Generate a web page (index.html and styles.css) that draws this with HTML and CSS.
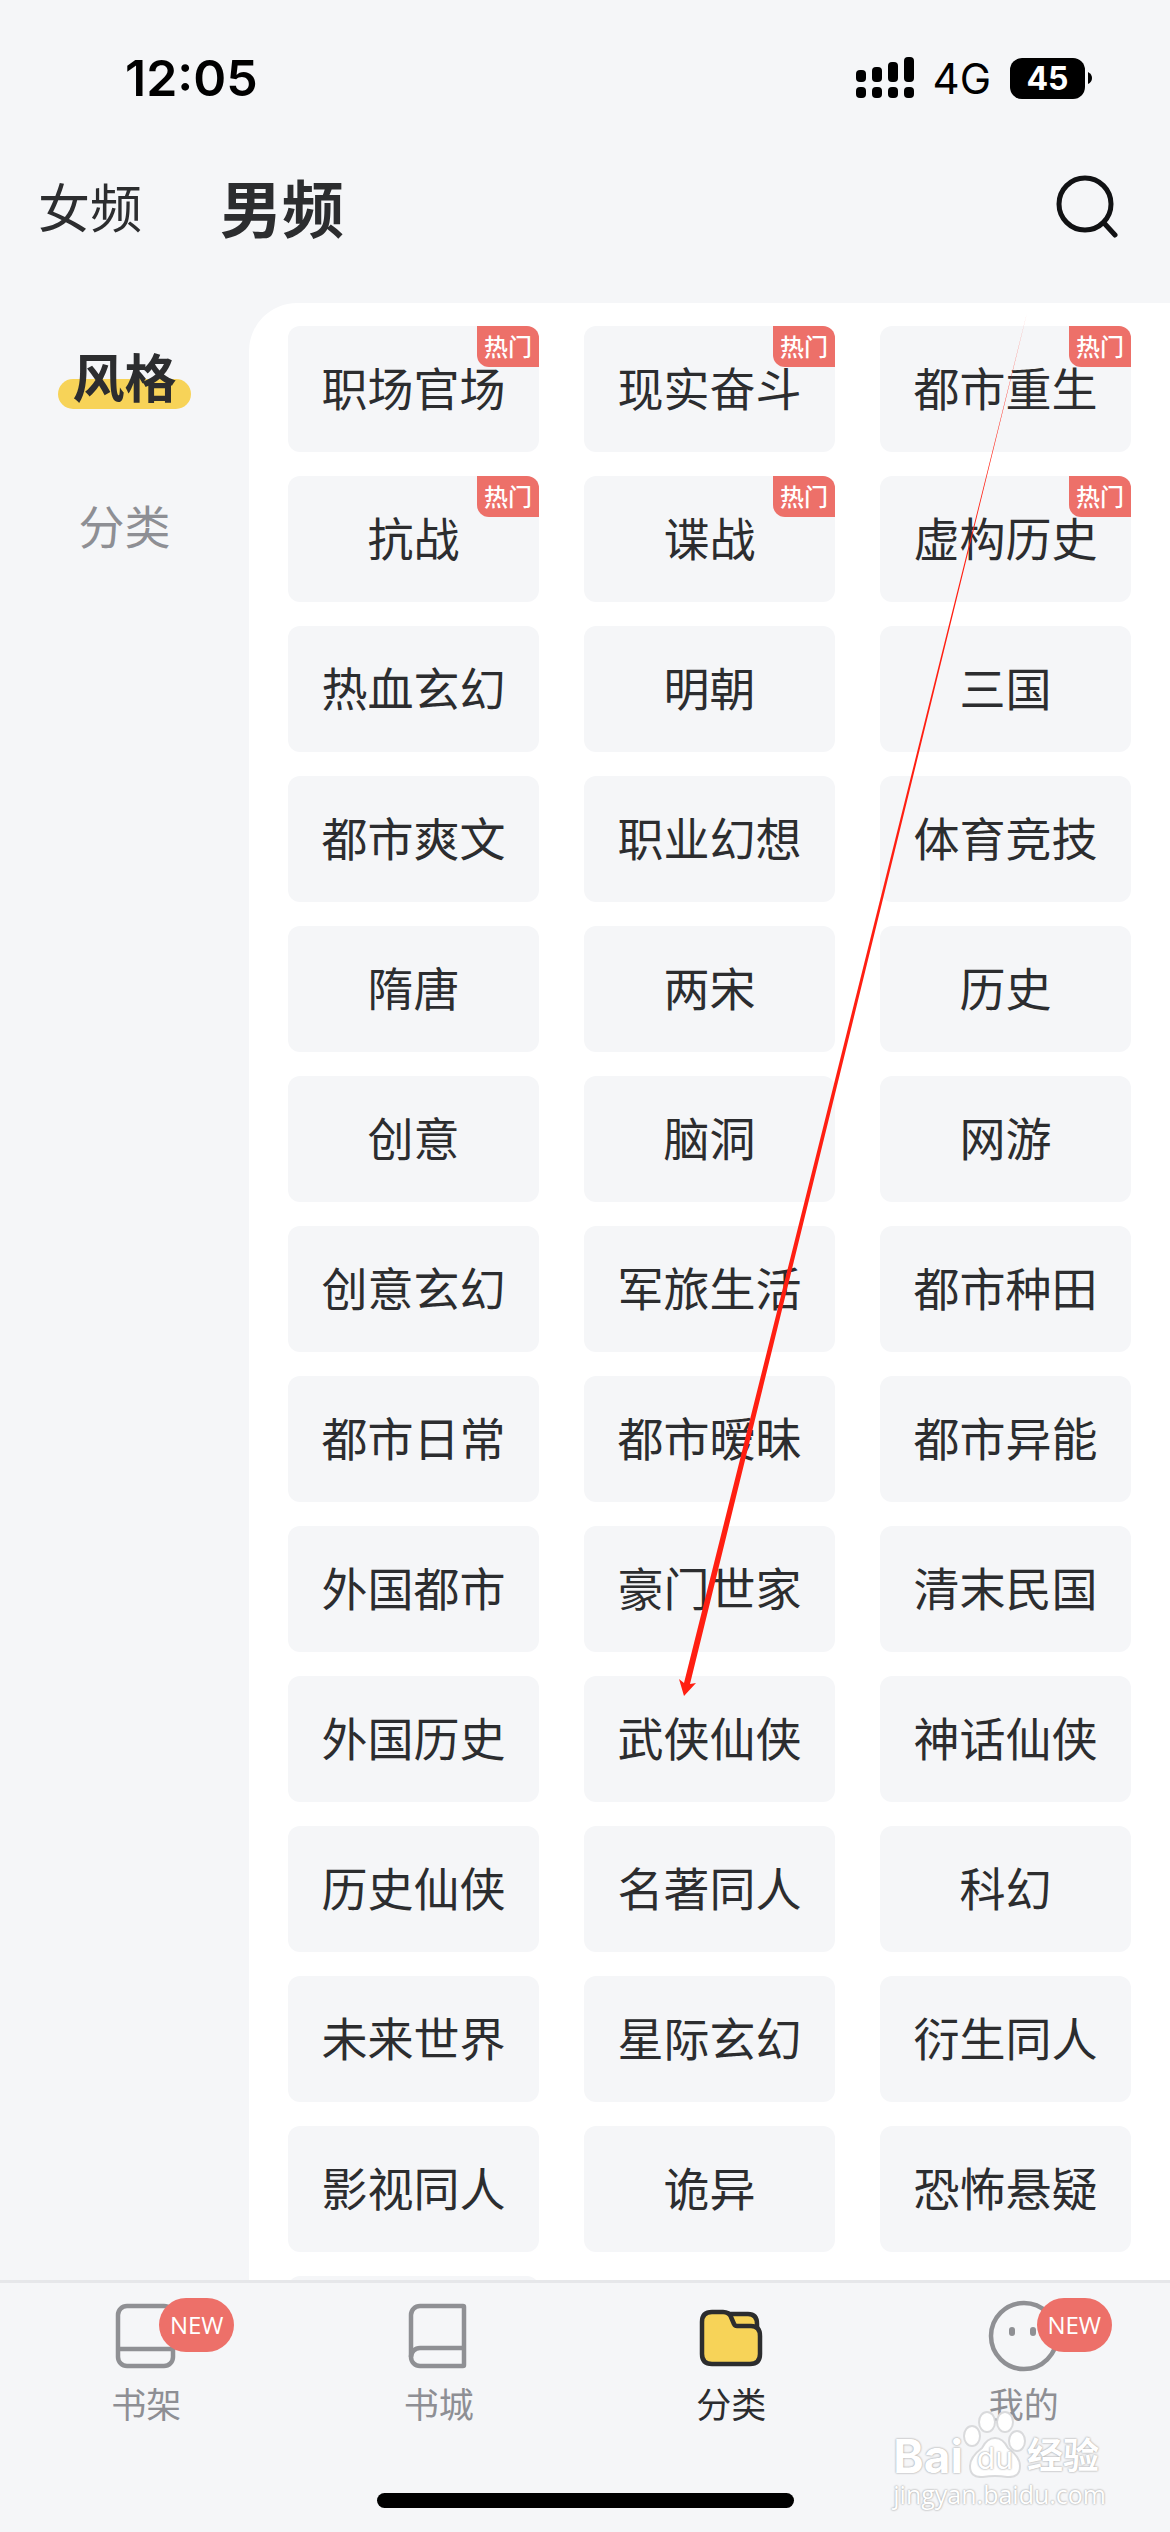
FILE: index.html
```html
<!DOCTYPE html>
<html lang="zh-CN">
<head>
<meta charset="utf-8">
<meta name="viewport" content="width=device-width, initial-scale=1">
<title>分类</title>
<link rel="stylesheet" href="styles.css">
</head>
<body>
<div class="app">
  <div class="status">
    <span class="time">12:05</span>
    <div class="status-right">
      <svg class="signal" width="58" height="42" viewBox="0 0 58 42" aria-hidden="true">
        <rect x="0" y="13" width="10" height="12" rx="4"/><rect x="16" y="10" width="10" height="15" rx="4"/><rect x="32" y="5" width="10" height="20" rx="4"/><rect x="48" y="0" width="10" height="25" rx="4"/>
        <rect x="0" y="30" width="10" height="11" rx="4"/><rect x="16" y="30" width="10" height="11" rx="4"/><rect x="32" y="30" width="10" height="11" rx="4"/><rect x="48" y="30" width="10" height="11" rx="4"/>
      </svg>
      <span class="network">4G</span>
      <div class="battery"><span class="battery-level">45</span><svg width="4" height="12" viewBox="0 0 4 12" aria-hidden="true"><path d="M0 0Q4 2 4 6T0 12Z"/></svg></div>
    </div>
  </div>

  <header class="header">
    <nav class="channels">
      <a class="channel" href="#female">女频</a>
      <a class="channel channel-active" href="#male">男频</a>
    </nav>
    <button class="search" type="button" aria-label="搜索">
      <svg width="64" height="64" viewBox="0 0 64 64" fill="none" stroke="#111214" stroke-width="5" stroke-linecap="round" aria-hidden="true"><circle cx="30" cy="30" r="26"/><path d="M49 49l11 12"/></svg>
    </button>
  </header>

  <div class="content">
    <nav class="sidebar">
      <a class="side-link side-active" href="#style">风格</a>
      <a class="side-link" href="#category">分类</a>
    </nav>
    <main class="panel">
      <div class="grid">
        <button class="tile" type="button">职场官场<span class="hot">热门</span></button>
        <button class="tile" type="button">现实奋斗<span class="hot">热门</span></button>
        <button class="tile" type="button">都市重生<span class="hot">热门</span></button>
        <button class="tile" type="button">抗战<span class="hot">热门</span></button>
        <button class="tile" type="button">谍战<span class="hot">热门</span></button>
        <button class="tile" type="button">虚构历史<span class="hot">热门</span></button>
        <button class="tile" type="button">热血玄幻</button>
        <button class="tile" type="button">明朝</button>
        <button class="tile" type="button">三国</button>
        <button class="tile" type="button">都市爽文</button>
        <button class="tile" type="button">职业幻想</button>
        <button class="tile" type="button">体育竞技</button>
        <button class="tile" type="button">隋唐</button>
        <button class="tile" type="button">两宋</button>
        <button class="tile" type="button">历史</button>
        <button class="tile" type="button">创意</button>
        <button class="tile" type="button">脑洞</button>
        <button class="tile" type="button">网游</button>
        <button class="tile" type="button">创意玄幻</button>
        <button class="tile" type="button">军旅生活</button>
        <button class="tile" type="button">都市种田</button>
        <button class="tile" type="button">都市日常</button>
        <button class="tile" type="button">都市暧昧</button>
        <button class="tile" type="button">都市异能</button>
        <button class="tile" type="button">外国都市</button>
        <button class="tile" type="button">豪门世家</button>
        <button class="tile" type="button">清末民国</button>
        <button class="tile" type="button">外国历史</button>
        <button class="tile" type="button">武侠仙侠</button>
        <button class="tile" type="button">神话仙侠</button>
        <button class="tile" type="button">历史仙侠</button>
        <button class="tile" type="button">名著同人</button>
        <button class="tile" type="button">科幻</button>
        <button class="tile" type="button">未来世界</button>
        <button class="tile" type="button">星际玄幻</button>
        <button class="tile" type="button">衍生同人</button>
        <button class="tile" type="button">影视同人</button>
        <button class="tile" type="button">诡异</button>
        <button class="tile" type="button">恐怖悬疑</button>
        <div class="tile"></div>
      </div>
    </main>
  </div>

  <footer class="footer">
    <nav class="tabs">
      <a class="tab" href="#shelf">
        <span class="tab-icon">
          <svg width="72" height="72" viewBox="0 0 72 72" fill="none" stroke="#8f9094" stroke-width="4.5" aria-hidden="true"><rect x="8" y="6" width="55" height="60" rx="9"/><path d="M8 49h55"/></svg>
          <span class="new">NEW</span>
        </span>
        <span>书架</span>
      </a>
      <a class="tab" href="#store">
        <span class="tab-icon">
          <svg width="72" height="72" viewBox="0 0 72 72" fill="none" stroke="#8f9094" stroke-width="4.5" stroke-linejoin="round" aria-hidden="true"><path d="M60 6H17a9 9 0 0 0-9 9v42a9 9 0 0 0 9 9h43a1 1 0 0 0 1-1V7a1 1 0 0 0-1-1Z"/><path d="M61 48H17a9 9 0 0 0-9 9"/></svg>
        </span>
        <span>书城</span>
      </a>
      <a class="tab tab-active" href="#category">
        <span class="tab-icon">
          <svg width="72" height="72" viewBox="0 0 72 72" fill="#f7d358" stroke="#2c2d2e" stroke-width="4.5" stroke-linejoin="round" aria-hidden="true"><path d="M30 14H53q9 0 9 10V36H30Z"/><path d="M17 12H28q6 0 8 5l3 7q1 2 3 2H56q9 0 9 10V54q0 10-10 10H17q-10 0-10-10V22q0-10 10-10Z"/></svg>
        </span>
        <span>分类</span>
      </a>
      <a class="tab" href="#mine">
        <span class="tab-icon">
          <svg width="72" height="72" viewBox="0 0 72 72" aria-hidden="true"><circle cx="36" cy="36" r="33" fill="none" stroke="#8f9094" stroke-width="4.5"/><rect x="21" y="27" width="6" height="9" rx="3" fill="#8f9094"/><rect x="42" y="27" width="6" height="9" rx="3" fill="#8f9094"/></svg>
          <span class="new">NEW</span>
        </span>
        <span>我的</span>
      </a>
    </nav>
    <div class="home-bar"></div>
    <div class="watermark">
      <div class="mark-row">
        <span>Bai</span>
        <span class="paw">
          <svg width="64" height="68" viewBox="0 0 64 68" fill="#fff" stroke="#d9dadc" stroke-width="2" aria-hidden="true"><ellipse cx="9" cy="26" rx="8" ry="10"/><ellipse cx="24" cy="12" rx="8" ry="10"/><ellipse cx="42" cy="12" rx="8" ry="10"/><ellipse cx="54" cy="31" rx="8" ry="10"/><path d="M32 28q8 0 13 10 12 9 12 18 0 12-13 11-12-2-24 0-13 1-13-11 0-9 12-18 5-10 13-10Z"/></svg>
          <span class="du">du</span>
        </span>
        <span class="mark-cn">经验</span>
      </div>
      <span class="mark-url">jingyan.baidu.com</span>
    </div>
  </footer>

  <svg class="arrow" viewBox="0 0 1170 2532" preserveAspectRatio="xMidYMin meet" aria-hidden="true"><path fill="#ff1f12" d="M1027 313L690 1684L696 1683L684 1696L679 1679L684 1683Z"/></svg>
</div>
</body>
</html>
```
FILE: styles.css
```css
* { box-sizing: border-box; }

body {
  margin: 0;
  background: #f5f6f8;
  color: #2c2d2f;
  font-family: "Noto Sans CJK SC", sans-serif;
}

a { color: inherit; text-decoration: none; }
button { border: 0; padding: 0; background: none; color: inherit; font: inherit; }
svg { display: block; }

.app {
  position: relative;
  display: flex;
  flex-direction: column;
  height: 100vh;
  overflow: hidden;
}

.status {
  display: flex;
  flex: none;
  justify-content: space-between;
  align-items: center;
  height: 156px;
  padding: 0 78px 0 125px;
  color: #000;
  font-family: Inter, sans-serif;
}
.time { font-size: 50px; font-weight: 600; }
.status-right { display: flex; align-items: center; gap: 19px; }
.network { font-size: 42px; }
.battery { display: flex; align-items: center; gap: 3px; }
.battery-level {
  width: 75px;
  border-radius: 12px;
  background: #000;
  color: #fff;
  font-size: 32px;
  font-weight: 700;
  line-height: 41px;
  text-align: center;
}

.header {
  display: flex;
  flex: none;
  justify-content: space-between;
  align-items: center;
  height: 147px;
  padding: 0 51px 48px 38px;
}
.channels { display: flex; align-items: center; gap: 78px; }
.channel { font-size: 52px; line-height: 64px; }
.channel-active { font-size: 62px; font-weight: 700; }

.content { display: flex; flex: 1; min-height: 0; }
.sidebar {
  display: flex;
  flex: none;
  flex-direction: column;
  align-items: center;
  gap: 82px;
  width: 249px;
  padding-top: 40px;
}
.side-link {
  position: relative;
  width: 133px;
  color: #8e8f94;
  font-size: 46px;
  line-height: 66px;
  text-align: center;
}
.side-active {
  color: #2c2d2f;
  font-size: 52px;
  font-weight: 700;
}
.side-active::before {
  content: "";
  position: absolute;
  right: 0;
  bottom: 0;
  left: 0;
  z-index: -1;
  height: 30px;
  border-radius: 15px;
  background: #f7d358;
}

.panel {
  flex: 1;
  padding: 23px 39px 0;
  overflow: hidden;
  border-radius: 48px 0 0 0;
  background: #fff;
}
.grid {
  display: grid;
  grid-template-columns: repeat(3, 1fr);
  gap: 24px 45px;
}
.tile {
  position: relative;
  height: 126px;
  padding-bottom: 6px;
  border-radius: 12px;
  background: #f5f6f8;
  font-size: 46px;
  line-height: 48px;
  text-align: center;
}
.hot {
  position: absolute;
  top: 0;
  right: 0;
  width: 62px;
  height: 41px;
  border-radius: 0 12px 0 12px;
  background: #ed7069;
  color: #fff;
  font-size: 24px;
  font-weight: 500;
  line-height: 39px;
}

.footer {
  position: relative;
  flex: none;
  height: 252px;
  padding-top: 17px;
  border-top: 3px solid #e6e7ea;
  background: #f5f6f8;
}
.tabs { display: grid; grid-template-columns: repeat(4, 1fr); }
.tab {
  display: flex;
  flex-direction: column;
  align-items: center;
  gap: 6px;
  color: #8e8f94;
  font-size: 35px;
  line-height: 50px;
}
.tab-active { color: #2c2d2f; }
.tab-icon { position: relative; }
.new {
  position: absolute;
  top: -2px;
  left: 49px;
  width: 75px;
  border-radius: 27px;
  background: #ed7069;
  color: #fff;
  font-family: "Open Sans", sans-serif;
  font-size: 24px;
  line-height: 54px;
  text-align: center;
}
.home-bar {
  width: 417px;
  height: 15px;
  margin: 65px auto 0;
  border-radius: 8px;
  background: #000;
}

.watermark {
  position: absolute;
  right: 64px;
  bottom: 22px;
  color: #fff;
  font-family: "Open Sans", "Noto Sans CJK SC", sans-serif;
  text-shadow: 0 0 2px #aaa, 0 0 2px #bbb;
}
.mark-row {
  display: flex;
  align-items: flex-end;
  font-family: Inter, "Noto Sans CJK SC", sans-serif;
  font-size: 46px;
  font-weight: 700;
  line-height: 44px;
}
.mark-cn { font-size: 36px; }
.paw { position: relative; }
.du {
  position: absolute;
  right: 0;
  bottom: -2px;
  left: 0;
  font-size: 30px;
  font-weight: 400;
  text-align: center;
}
.mark-url { display: block; font-size: 25px; line-height: 32px; }

.arrow {
  position: absolute;
  top: 0;
  left: 0;
  width: 100%;
  pointer-events: none;
}
```
